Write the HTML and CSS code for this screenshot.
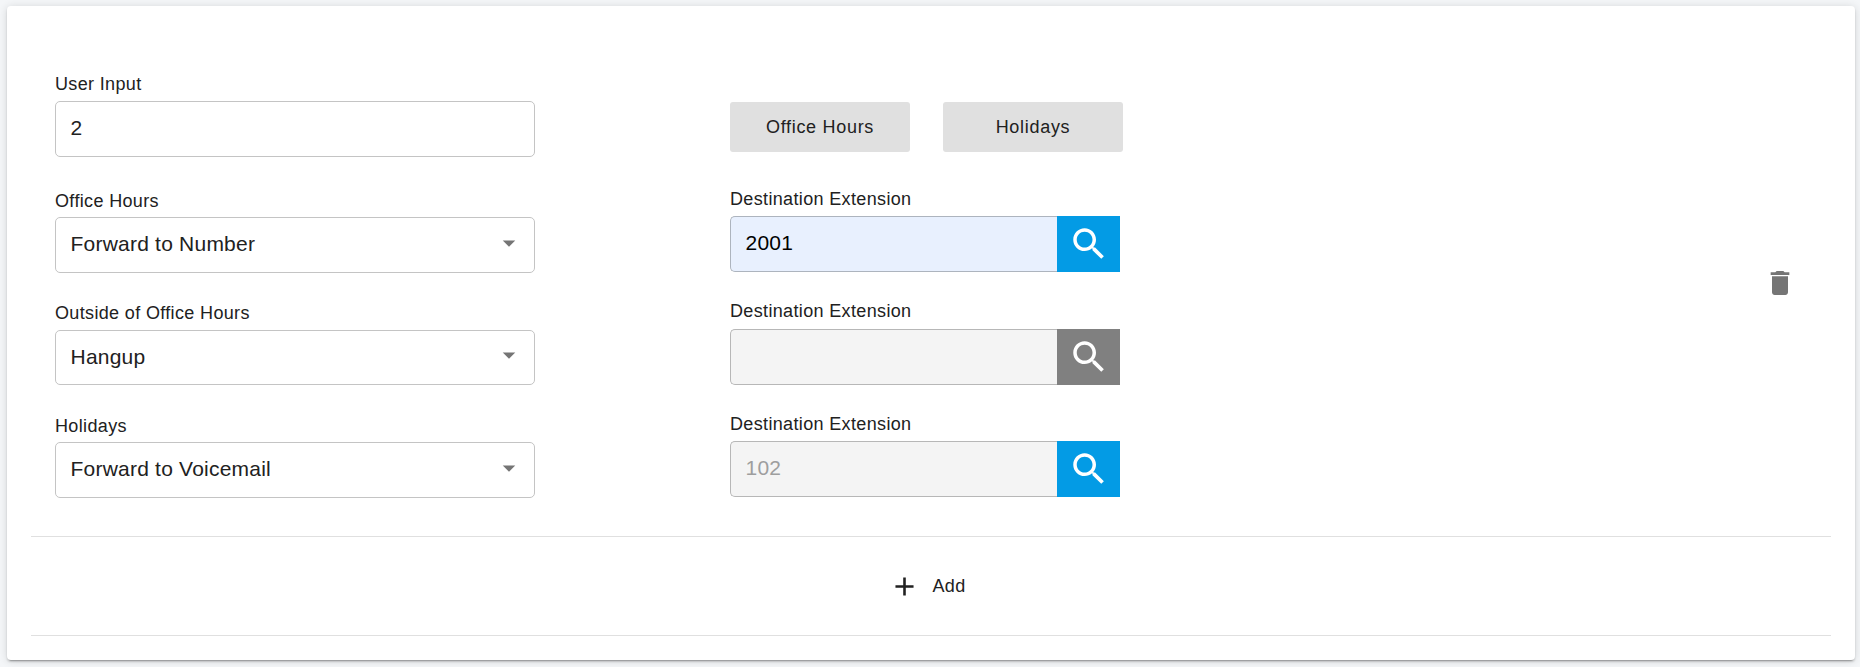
FILE: index.html
```html
<!DOCTYPE html>
<html lang="en">
<head>
<meta charset="utf-8">
<title>Call menu</title>
<link rel="stylesheet" href="styles.css">
</head>
<body>
<svg class="defs" aria-hidden="true">
  <symbol id="search" viewBox="0 0 24 24"><path d="M15.5 14h-.79l-.28-.27C15.41 12.59 16 11.11 16 9.5 16 5.91 13.09 3 9.5 3S3 5.91 3 9.5 5.91 16 9.5 16c1.61 0 3.09-.59 4.23-1.57l.27.28v.79l5 4.99L20.49 19l-4.99-5zm-6 0C7.01 14 5 11.99 5 9.5S7.01 5 9.5 5 14 7.01 14 9.5 11.99 14 9.5 14z"/></symbol>
  <symbol id="arrow" viewBox="0 0 24 24"><path d="M7 10l5 5 5-5z"/></symbol>
</svg>
<main class="card">
  <section class="entry">
    <div class="column actions">
      <div class="field first"><label class="label">User Input</label><div class="control">2</div></div>
      <div class="field second"><label class="label low">Office Hours</label><div class="control">Forward to Number<svg class="arrow"><use href="#arrow"/></svg></div></div>
      <div class="field third"><label class="label">Outside of Office Hours</label><div class="control short">Hangup<svg class="arrow"><use href="#arrow"/></svg></div></div>
      <div class="field"><label class="label low">Holidays</label><div class="control">Forward to Voicemail<svg class="arrow"><use href="#arrow"/></svg></div></div>
    </div>
    <div class="column destinations">
      <div class="buttons"><button class="button">Office Hours</button><button class="button">Holidays</button></div>
      <div class="field dest-first"><label class="label">Destination Extension</label><div class="lookup"><div class="control filled">2001</div><button class="find"><svg class="glass"><use href="#search"/></svg></button></div></div>
      <div class="field dest-second"><label class="label tall">Destination Extension</label><div class="lookup"><div class="control disabled"></div><button class="find off"><svg class="glass"><use href="#search"/></svg></button></div></div>
      <div class="field"><label class="label">Destination Extension</label><div class="lookup"><div class="control disabled">102</div><button class="find"><svg class="glass"><use href="#search"/></svg></button></div></div>
    </div>
    <svg class="trash" viewBox="0 0 24 24"><path d="M6 19c0 1.1.9 2 2 2h8c1.1 0 2-.9 2-2V7H6v12zM19 4h-3.5l-1-1h-5l-1 1H5v2h14V4z"/></svg>
  </section>
  <button class="add"><svg class="plus" viewBox="0 0 24 24"><path d="M19 13h-6v6h-2v-6H5v-2h6V5h2v6h6v2z"/></svg>Add</button>
</main>
</body>
</html>
```
FILE: styles.css
```css
* { box-sizing: border-box; }
body {
  margin: 0;
  padding: 6px 5px 7px 7px;
  height: 667px;
  overflow: hidden;
  background: #f4f6f8;
  font-family: "Liberation Sans", Arial, sans-serif;
  color: #212121;
}
button { border: 0; padding: 0; font: inherit; color: inherit; }
.defs { display: none; }
.card {
  height: 654px;
  padding: 0 24px;
  background: #fff;
  border-radius: 4px;
  box-shadow: 0 3px 1px -2px rgba(0,0,0,.2), 0 2px 2px 0 rgba(0,0,0,.14), 0 1px 8px 0 rgba(0,0,0,.14);
}
.entry {
  display: flex;
  height: 531px;
  padding: 67px 35px 0 24px;
  border-bottom: 1px solid #e0e0e0;
}
.column { display: flex; flex-direction: column; }
.actions { width: 480px; margin-right: 195px; }
.destinations { width: 393px; padding-top: 29px; }
.label {
  display: block;
  height: 28px;
  line-height: 22px;
  font-size: 18px;
  letter-spacing: .35px;
  white-space: nowrap;
}
.label.low { padding-top: 1px; }
.label.tall { height: 29px; }
.first { margin-bottom: 32px; }
.second { margin-bottom: 29px; }
.third { margin-bottom: 29px; }
.control {
  display: flex;
  align-items: center;
  justify-content: space-between;
  height: 56px;
  padding: 0 10px 2px 14.5px;
  border: 1px solid #c4c4c4;
  border-radius: 5px;
  font-size: 21px;
  letter-spacing: .22px;
}
.short { height: 55px; }
.arrow { width: 30px; height: 30px; margin-bottom: 3px; fill: #757575; }
.buttons { display: flex; gap: 33px; margin-bottom: 36px; }
.button {
  width: 180px;
  height: 50px;
  border-radius: 3px;
  background: #e0e0e0;
  font-size: 18px;
  letter-spacing: .7px;
}
.dest-first, .dest-second { margin-bottom: 28px; }
.lookup { display: flex; width: 390px; }
.lookup .control {
  width: 327px;
  border-right: 0;
  border-radius: 5px 0 0 5px;
}
.lookup .filled { background: #e8f0fe; border-color: #adb4be; color: #000; }
.lookup .disabled { background: #f4f4f4; border-color: #b7b7b7; color: #9e9e9e; }
.find {
  display: flex;
  align-items: center;
  justify-content: center;
  width: 63px;
  height: 56px;
  padding-bottom: 1px;
  background: #039be5;
}
.find.off { background: #808080; }
.glass { width: 42px; height: 42px; fill: #fff; }
.trash { width: 32px; height: 32px; margin: 194px 0 0 auto; fill: #757575; }
.add {
  display: flex;
  align-items: center;
  justify-content: center;
  gap: 12px;
  width: 100%;
  height: 99px;
  padding-right: 7px;
  border-bottom: 1px solid #e0e0e0;
  background: none;
  font-size: 18px;
  letter-spacing: .4px;
}
.plus { width: 31px; height: 31px; fill: #212121; }
```
